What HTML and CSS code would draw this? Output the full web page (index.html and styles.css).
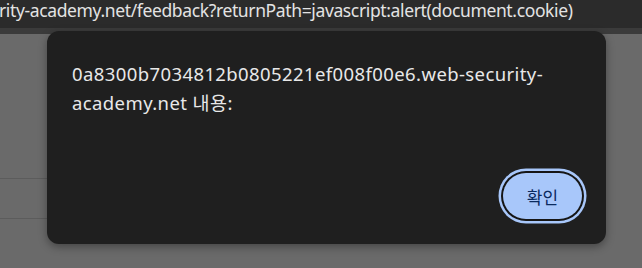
FILE: index.html
```html
<!DOCTYPE html>
<html lang="ko">
<head>
<meta charset="utf-8">
<link rel="stylesheet" href="styles.css">
</head>
<body>
<div class="urlbar"><span class="url">rity-academy.net/feedback?returnPath=javascript:alert(document.cookie)</span></div>
<div class="band"></div>
<div class="page">
  <div class="rule rule-a"></div>
  <div class="rule rule-b"></div>
</div>
<div class="dialog" role="dialog">
  <p class="message">0a8300b7034812b0805221ef008f00e6.web-security-<br>academy.net 내용:</p>
  <div class="actions">
    <button class="ok">확인</button>
  </div>
</div>
</body>
</html>
```
FILE: styles.css
```css
html, body {
  margin: 0;
  padding: 0;
  width: 642px;
  height: 268px;
  overflow: hidden;
  background: #6a6a6a;
  font-family: "Noto Sans", "Noto Sans CJK KR", sans-serif;
}
.urlbar {
  height: 28px;
  background: #2b2b2b;
  display: flex;
  align-items: flex-start;
  overflow: hidden;
  white-space: nowrap;
}
.url {
  color: #e3e3e3;
  font-size: 17.5px;
  line-height: 20px;
  letter-spacing: -0.37px;
  margin-left: -1px;
  padding-top: 0;
}
.band {
  height: 6px;
  background: #3b3b3b;
}
.page {
  position: relative;
  height: 234px;
}
.rule {
  position: absolute;
  left: 0;
  width: 300px;
  height: 1px;
  background: #5c5c5c;
}
.rule-a { top: 144px; }
.rule-b { top: 184px; }
.dialog {
  position: absolute;
  left: 47px;
  top: 31px;
  width: 559px;
  height: 213px;
  box-sizing: border-box;
  background: #1f1f1f;
  border-radius: 12px;
  box-shadow: 0 3px 8px rgba(0,0,0,0.35);
  padding: 28px 24px 20px 25px;
  display: flex;
  flex-direction: column;
}
.message {
  margin: 0;
  color: #e8e8e8;
  font-size: 18.5px;
  letter-spacing: 0.4px;
  line-height: 29px;
  flex: 1;
}
.actions {
  display: flex;
  justify-content: flex-end;
  padding-bottom: 5px;
}
.ok {
  width: 79px;
  height: 46px;
  border: none;
  border-radius: 23px;
  background: #a8c7fa;
  color: #0a2a5e;
  font-family: "Noto Sans CJK KR", sans-serif;
  font-size: 17px;
  box-shadow: 0 0 0 2px #161616, 0 0 0 4.5px #a8c7fa;
  padding: 0;
}
```
